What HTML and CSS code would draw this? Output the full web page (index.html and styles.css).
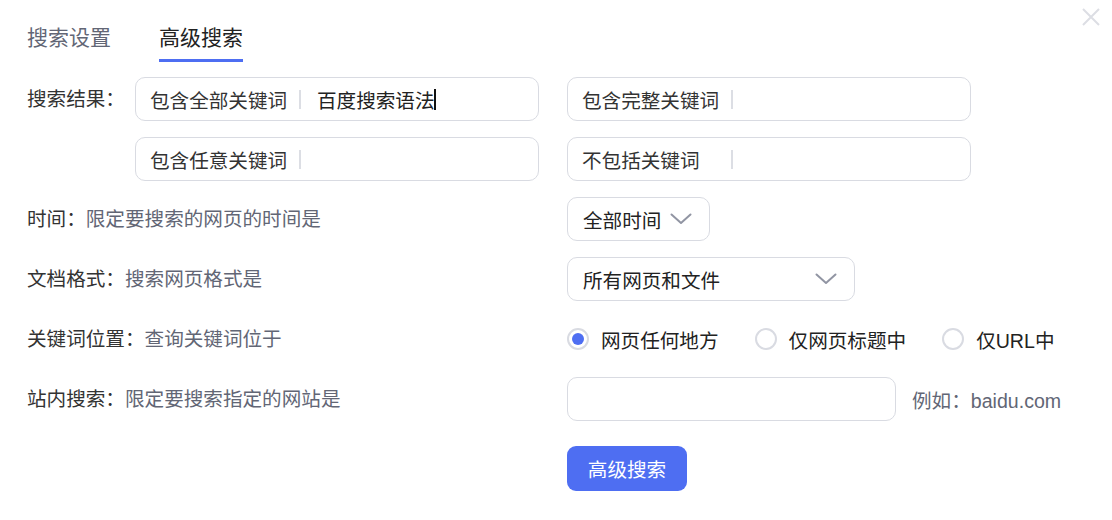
FILE: index.html
```html
<!DOCTYPE html>
<html lang="zh">
<head>
<meta charset="utf-8">
<title>高级搜索</title>
<link rel="stylesheet" href="styles.css">
</head>
<body>
<div class="dialog">
  <svg class="close" width="20" height="20" viewBox="0 0 20 20"><path d="M2 2 L18 18 M18 2 L2 18" stroke="#dcdee4" stroke-width="2" fill="none"/></svg>
  <div class="tabs">
    <div class="tab">搜索设置</div>
    <div class="tab active">高级搜索</div>
  </div>
  <div class="form">
    <div class="row result-row">
      <div class="label label-short">搜索结果：</div>
      <div class="inputs">
        <div class="field"><span class="fl">包含全部关键词</span><span class="sep"></span><span class="typed">百度搜索语法</span><span class="caret"></span></div>
        <div class="field"><span class="fl">包含完整关键词</span><span class="sep"></span></div>
        <div class="field"><span class="fl">包含任意关键词</span><span class="sep"></span></div>
        <div class="field"><span class="fl">不包括关键词</span><span class="sep"></span></div>
      </div>
    </div>
    <div class="row">
      <div class="label">时间：<span class="desc">限定要搜索的网页的时间是</span></div>
      <div class="select select-time"><span>全部时间</span><svg class="chev" width="22" height="12" viewBox="0 0 22 12"><path d="M1.5 1.5 L11 10 L20.5 1.5" stroke="#9195a3" stroke-width="2" fill="none" stroke-linecap="round" stroke-linejoin="round"/></svg></div>
    </div>
    <div class="row">
      <div class="label">文档格式：<span class="desc">搜索网页格式是</span></div>
      <div class="select select-format"><span>所有网页和文件</span><svg class="chev" width="22" height="12" viewBox="0 0 22 12"><path d="M1.5 1.5 L11 10 L20.5 1.5" stroke="#9195a3" stroke-width="2" fill="none" stroke-linecap="round" stroke-linejoin="round"/></svg></div>
    </div>
    <div class="row">
      <div class="label">关键词位置：<span class="desc">查询关键词位于</span></div>
      <div class="radios">
        <label class="radio"><span class="circle checked"></span>网页任何地方</label>
        <label class="radio"><span class="circle"></span>仅网页标题中</label>
        <label class="radio"><span class="circle"></span>仅URL中</label>
      </div>
    </div>
    <div class="row">
      <div class="label">站内搜索：<span class="desc">限定要搜索指定的网站是</span></div>
      <div class="site"><div class="site-input"></div><span class="hint">例如：baidu.com</span></div>
    </div>
    <div class="row btn-row">
      <div class="label"></div>
      <button class="btn">高级搜索</button>
    </div>
  </div>
</div>
</body>
</html>
```

FILE: styles.css
```css
html, body {
  margin: 0;
  padding: 0;
  background: #fff;
}
body {
  font-family: "Liberation Sans", "Noto Sans CJK SC", sans-serif;
  color: #222;
  font-size: 19.6px;
}
.dialog {
  position: relative;
  width: 1112px;
  height: 520px;
  padding: 24px 0 0 27px;
  box-sizing: border-box;
}
.close {
  position: absolute;
  top: 7px;
  right: 11px;
}
.tabs {
  display: flex;
  gap: 48px;
}
.tab {
  font-size: 21px;
  line-height: 28px;
  color: #626675;
  padding-bottom: 7px;
  border-bottom: 3px solid transparent;
}
.tab.active {
  color: #222;
  border-bottom-color: #4e6ef2;
}
.form {
  margin-top: 15px;
  display: flex;
  flex-direction: column;
  gap: 16px;
}
.row {
  display: flex;
  align-items: center;
  min-height: 44px;
}
.result-row {
  align-items: flex-start;
}
.label {
  width: 540px;
  flex: none;
  color: #333;
  line-height: 44px;
}
.label-short {
  width: 108px;
}
.desc {
  color: #626675;
}
.inputs {
  display: grid;
  grid-template-columns: 404px 404px;
  column-gap: 28px;
  row-gap: 16px;
}
.field, .select, .site-input {
  height: 44px;
  box-sizing: border-box;
  border: 1px solid #d9dbe2;
  border-radius: 10px;
  background: #fff;
}
.field {
  display: flex;
  align-items: center;
  padding-left: 14px;
  color: #333;
}
.fl {
  width: 149px;
  flex: none;
}
.sep {
  width: 2px;
  height: 19px;
  background: #dcdee4;
  margin-right: 16px;
}
.typed {
  color: #222;
}
.caret {
  width: 2px;
  height: 21px;
  background: #111;
  margin-left: -1px;
}
.select {
  display: flex;
  align-items: center;
  justify-content: space-between;
  padding: 0 17px 0 15px;
  color: #222;
}
.select-time {
  width: 143px;
}
.select-format {
  width: 288px;
}
.chev {
  display: block;
}
.radios {
  display: flex;
  align-items: center;
  gap: 36px;
}
.radio {
  display: flex;
  align-items: center;
  gap: 12px;
  color: #222;
}
.circle {
  width: 22px;
  height: 22px;
  box-sizing: border-box;
  border: 2px solid #d9dbe2;
  border-radius: 50%;
  display: flex;
  align-items: center;
  justify-content: center;
}
.circle.checked::after {
  content: "";
  width: 12px;
  height: 12px;
  border-radius: 50%;
  background: #4e6ef2;
}
.site {
  display: flex;
  align-items: center;
  gap: 16px;
}
.site-input {
  width: 329px;
}
.hint {
  color: #626675;
}
.btn-row {
  margin-top: 9px;
}
.btn {
  width: 120px;
  height: 45px;
  border: none;
  border-radius: 9px;
  background: #4e6ef2;
  color: #fff;
  font-family: inherit;
  font-size: 19.6px;
  padding: 0;
}
```
